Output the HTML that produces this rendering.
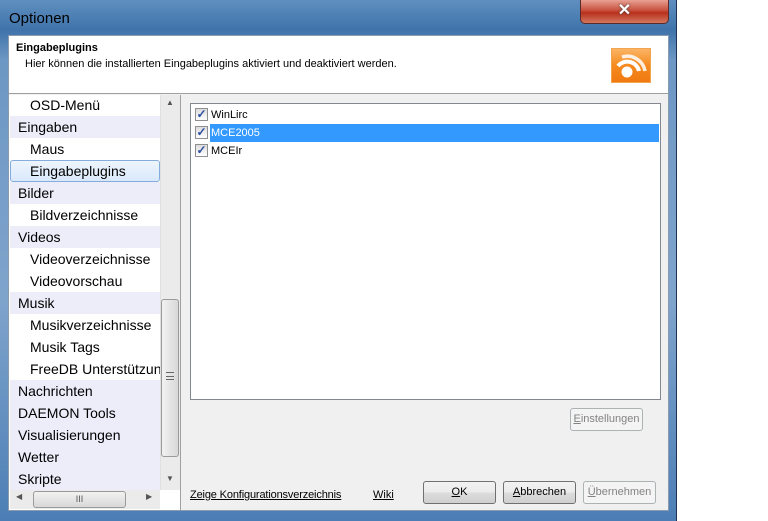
<!DOCTYPE html>
<html><head><meta charset="utf-8"><style>
*{margin:0;padding:0;box-sizing:border-box}
body{width:768px;height:521px;background:#fff;font-family:"Liberation Sans",sans-serif;position:relative;overflow:hidden}
.a{position:absolute}
.win{left:0;top:0;width:677px;height:521px;background:linear-gradient(180deg,#5f8fbf 0,#3f73aa 30px,#6d97c4 60px,#7fa4cc 300px,#4c7eb5 521px);border-right:1px solid #1d3550}
.t{font-size:15px;color:#000}
.tree{font-size:14px;color:#000}
.tree div{position:absolute;left:10px;width:150px;height:22px;line-height:22px;white-space:nowrap;overflow:hidden}
.h{background:#ededfa;padding-left:8px}
.s{padding-left:20px}
.btn{border:1px solid #707070;border-radius:3px;background:linear-gradient(#f2f2f2,#ebebeb 50%,#dddddd 51%,#cfcfcf);font-size:11px;text-align:center;line-height:21px;height:23px}
.dis{border-color:#adb2b5;background:#f4f4f4;color:#838383}
.cb{position:absolute;left:4px;width:13px;height:13px;border:1px solid #8e8f8f;background:linear-gradient(#dcdcdc,#fff);color:#2a4fa0;font-size:12px;line-height:11px;text-align:center;font-weight:bold}
.li{position:absolute;left:0;width:468px;height:18px;font-size:11px;line-height:18px}
</style></head><body>
<div class="a win"></div>
<div class="a t" style="left:9px;top:10px">Optionen</div>
<div class="a" style="left:580px;top:0;width:89px;height:24px;border:1px solid #5a2a2a;border-top:none;border-radius:0 0 5px 5px;background:linear-gradient(#e8a093,#c7513d 45%,#b8301c 55%,#d2775f);color:#fff;font-size:16px;font-weight:bold;text-align:center;line-height:21px;text-shadow:0 0 2px #333">✕</div>
<div class="a" style="left:8px;top:35px;width:661px;height:476px;background:#f0f0f0;border:1px solid #8a9bb0"></div>
<div class="a" style="left:9px;top:36px;width:659px;height:58px;background:#fff;border-bottom:1px solid #a0a0a0"></div>
<div class="a" style="left:16px;top:42px;font-size:11px;font-weight:bold">Eingabeplugins</div>
<div class="a" style="left:25px;top:58px;font-size:11px">Hier können die installierten Eingabeplugins aktiviert und deaktiviert werden.</div>
<div class="a" style="left:611px;top:48px;width:40px;height:35px;background:linear-gradient(#fbb465,#f58a1f 50%,#f07a10);border:1px solid #f3a450"><svg width="38" height="33" viewBox="0 0 38 33"><circle cx="15" cy="23" r="5.5" fill="#fff"/><path d="M6 17 A12 12 0 0 1 27 22" stroke="#fff" stroke-width="4" fill="none"/><path d="M10 8 A18 18 0 0 1 33 22" stroke="#fff" stroke-width="3.5" fill="none" opacity=".85"/></svg></div>
<div class="a" style="left:9px;top:95px;width:172px;height:415px;background:#fff;border-right:1px solid #a0a0a0"></div>
<div class="a tree">
<div class="s" style="top:94px">OSD-Menü</div>
<div class="h" style="top:116px">Eingaben</div>
<div class="s" style="top:138px">Maus</div>
<div class="s" style="top:160px;background:linear-gradient(#eef5fd,#d9e9fb);border:1px solid #84acdd;border-radius:3px;line-height:20px;padding-left:19px">Eingabeplugins</div>
<div class="h" style="top:182px">Bilder</div>
<div class="s" style="top:204px">Bildverzeichnisse</div>
<div class="h" style="top:226px">Videos</div>
<div class="s" style="top:248px">Videoverzeichnisse</div>
<div class="s" style="top:270px">Videovorschau</div>
<div class="h" style="top:292px">Musik</div>
<div class="s" style="top:314px">Musikverzeichnisse</div>
<div class="s" style="top:336px">Musik Tags</div>
<div class="s" style="top:358px">FreeDB Unterstützung</div>
<div class="h" style="top:380px;height:110px;line-height:22px">Nachrichten<br>DAEMON Tools<br>Visualisierungen<br>Wetter<br>Skripte</div>
</div>
<div class="a" style="left:160px;top:95px;width:20px;height:395px;background:#ebebeb;border-left:1px solid #e0e0e0"></div>
<div class="a" style="left:166px;top:98px;font-size:8px;color:#555">▲</div>
<div class="a" style="left:166px;top:474px;font-size:8px;color:#555">▼</div>
<div class="a" style="left:161px;top:299px;width:18px;height:158px;border:1px solid #9a9a9a;border-radius:3px;background:linear-gradient(90deg,#f2f2f2,#d8d8d8)"></div>
<div class="a" style="left:166px;top:372px;width:8px;height:8px;border-top:1px solid #666;border-bottom:1px solid #666"><div style="margin-top:3px;border-top:1px solid #666"></div></div>
<div class="a" style="left:10px;top:490px;width:150px;height:19px;background:#ebebeb"></div>
<div class="a" style="left:16px;top:492px;font-size:8px;color:#555">◀</div>
<div class="a" style="left:146px;top:492px;font-size:8px;color:#555">▶</div>
<div class="a" style="left:33px;top:491px;width:93px;height:17px;border:1px solid #9a9a9a;border-radius:3px;background:linear-gradient(#f2f2f2,#d8d8d8);font-size:9px;text-align:center;line-height:14px;color:#555">III</div>
<div class="a" style="left:190px;top:103px;width:471px;height:297px;background:#fff;border:1px solid #828790">
<div class="li" style="top:2px"><span class="cb" style="top:2px">✓</span><span style="padding-left:20px">WinLirc</span></div>
<div class="li" style="top:20px"><span class="cb" style="top:2px">✓</span><span style="position:absolute;left:19px;width:449px;background:#3399ff;color:#fff;padding-left:1px">MCE2005</span></div>
<div class="li" style="top:38px"><span class="cb" style="top:2px">✓</span><span style="padding-left:20px">MCEIr</span></div>
</div>
<div class="a btn dis" style="left:570px;top:408px;width:73px"><u>E</u>instellungen</div>
<div class="a" style="left:190px;top:489px;font-size:11px;letter-spacing:-0.15px;text-decoration:underline">Zeige Konfigurationsverzeichnis</div>
<div class="a" style="left:373px;top:489px;font-size:11px;text-decoration:underline">Wiki</div>
<div class="a btn" style="left:423px;top:481px;width:73px"><u>O</u>K</div>
<div class="a btn" style="left:503px;top:481px;width:73px"><u>A</u>bbrechen</div>
<div class="a btn dis" style="left:583px;top:481px;width:73px"><u>Ü</u>bernehmen</div>
</body></html>
